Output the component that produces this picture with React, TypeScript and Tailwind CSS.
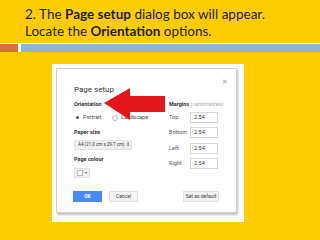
import React from "react"

function MarginRow({ label }: { label: string }) {
  return (
    <div className="flex items-center h-[11px]">
      <span className="w-[21px] text-[5.5px] text-[#555]">{label}</span>
      <div className="w-[28px] h-[11px] border border-[#d6d6d6] bg-white flex items-center pl-[3px] text-[5.5px] text-[#333]">
        2.54
      </div>
    </div>
  )
}

function RedArrow() {
  return (
    <svg
      className="absolute left-[47px] top-[19px]"
      width="62"
      height="33"
      viewBox="0 0 62 33"
    >
      <path d="M0 15 L26 0 L26 8 L61 8 L61 24 L26 24 L26 32 Z" fill="#e3161b" />
    </svg>
  )
}

export default function App() {
  return (
    <div
      className="w-[320px] h-[240px] overflow-hidden bg-[#ffcc00] relative"
      style={{ fontFamily: "Roboto, 'Liberation Sans', sans-serif" }}
    >
      <div
        className="pl-[25px] pt-[6px] text-[13.5px] leading-[17px] text-[#1c1c1c]"
        style={{ fontFamily: "Lato, sans-serif" }}
      >
        <p>
          2. The <b>Page setup</b> dialog box will appear.
        </p>
        <p>
          Locate the <b>Orientation</b> options.
        </p>
      </div>

      <div className="mt-[3px] border-t border-white flex h-[9px]">
        <div className="w-[18px] bg-[#d4703c]" />
        <div className="w-[3px] bg-white" />
        <div className="flex-1 bg-[#8fb4d6]" />
      </div>

      <div className="ml-[52px] mt-[12px] w-[192px] h-[158px] bg-white pl-[4px] pt-[4px]">
        <div className="relative w-[181px] h-[145px] border border-[#cfcfd4] shadow-[1px_2px_2px_rgba(0,0,0,0.25)] bg-white">
          <span className="absolute right-[8px] top-[8px] text-[7px] text-[#999]">✕</span>

          <div className="pl-[17px] pt-[16px] text-[8px] leading-[10px] text-[#333]">Page setup</div>

          <div className="flex pl-[17px] mt-[6px]">
            <div className="w-[95px]">
              <div className="text-[5.5px] leading-[7px] font-bold text-[#333]">Orientation</div>
              <div className="flex items-center h-[7px] mt-[6px] text-[5.5px] text-[#444]">
                <span className="w-[3px] h-[3px] rounded-full bg-[#555] ml-[2px] mr-[4px]" />
                <span>Portrait</span>
                <span className="w-[6px] h-[6px] rounded-full border border-[#bbb] ml-[11px] mr-[3px]" />
                <span>Landscape</span>
              </div>
              <div className="text-[5.5px] leading-[7px] font-bold text-[#333] mt-[8px]">Paper size</div>
              <div className="mt-[4px] w-[58px] h-[10px] rounded-[1px] bg-[#f1f1f1] border border-[#e2e2e2] flex items-center pl-[3px] text-[4.5px] text-[#333] whitespace-nowrap">
                A4 (21.0 cm x 29.7 cm) ⇕
              </div>
              <div className="text-[5.5px] leading-[7px] font-bold text-[#333] mt-[6px]">Page colour</div>
              <div className="mt-[5px] w-[16px] h-[10px] bg-[#f1f1f1] border border-[#e2e2e2] flex items-center pl-[2px] gap-[2px]">
                <span className="w-[6px] h-[6px] bg-white border border-[#bbb]" />
                <span className="text-[4px] text-[#555]">▾</span>
              </div>
            </div>
            <div>
              <div className="text-[5.5px] leading-[7px] text-[#333]">
                <b>Margins</b> <span className="text-[#aaa]">(centimetres)</span>
              </div>
              <div className="flex flex-col gap-[4.5px] mt-[3.5px]">
                <MarginRow label="Top" />
                <MarginRow label="Bottom" />
                <MarginRow label="Left" />
                <MarginRow label="Right" />
              </div>
            </div>
          </div>

          <div className="flex items-center pl-[16px] pr-[17px] mt-[13px]">
            <div className="w-[29px] h-[11px] bg-[#4a8af4] text-white text-[5px] font-bold flex items-center justify-center">
              OK
            </div>
            <div className="ml-[7px] w-[29px] h-[11px] bg-[#f2f2f2] border border-[#e0e0e0] text-[#444] text-[5px] flex items-center justify-center">
              Cancel
            </div>
            <div className="ml-auto w-[36px] h-[11px] bg-[#f2f2f2] border border-[#e0e0e0] text-[#444] text-[5px] flex items-center justify-center">
              Set as default
            </div>
          </div>

          <RedArrow />
        </div>
      </div>
    </div>
  )
}
